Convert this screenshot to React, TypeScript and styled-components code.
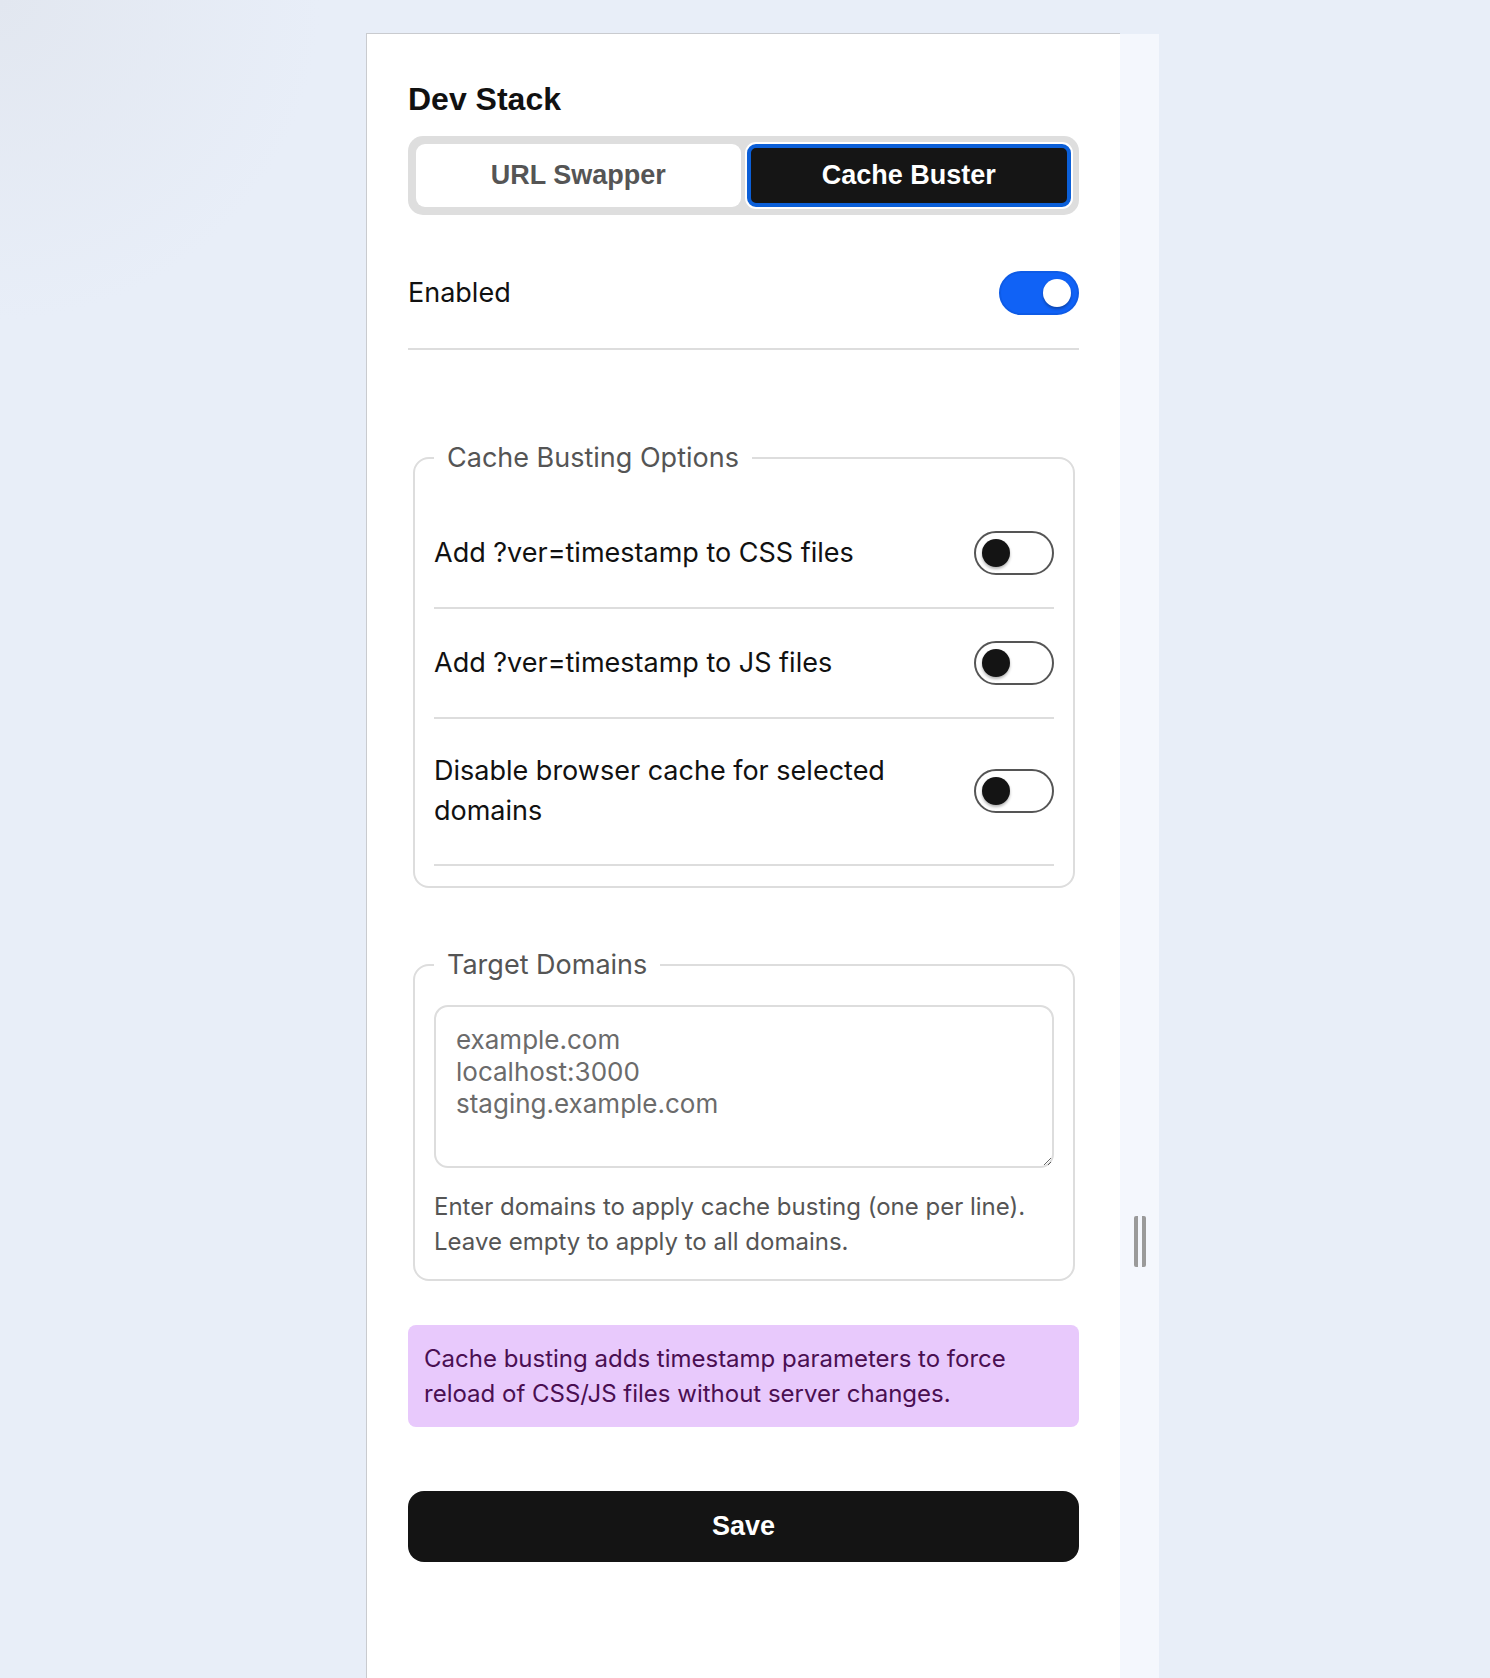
import { useState } from 'react';

import { createGlobalStyle, styled } from 'styled-components';

const GlobalStyle = createGlobalStyle`
  * {
    box-sizing: border-box;
  }

  html,
  body {
    margin: 0;
    padding: 0;
    height: 100%;
  }

  body {
    background: radial-gradient(circle at 0 0, #e2e7f0 0, #e8eef8 320px);
    font-family: Inter, 'Noto Sans', sans-serif;
    color: #111;
  }
`;

const SWITCH_LABELS = [
  'Add ?ver=timestamp to CSS files',
  'Add ?ver=timestamp to JS files',
  'Disable browser cache for selected domains',
];

const DOMAINS_PLACEHOLDER = 'example.com\nlocalhost:3000\nstaging.example.com';

/**
 * 토글 스위치. on 이면 파란 배경에 흰 손잡이.
 */
const Toggle = ({ on, onClick }: { on: boolean; onClick: () => void }) => (
  <S.Switch type="button" $on={on} onClick={onClick} aria-pressed={on}>
    <S.Knob $on={on} />
  </S.Switch>
);

export default function App() {
  const [tab, setTab] = useState<'url' | 'cache'>('cache');
  const [enabled, setEnabled] = useState(true);
  const [options, setOptions] = useState([false, false, false]);

  const flip = (index: number) =>
    setOptions((prev) => prev.map((value, i) => (i === index ? !value : value)));

  return (
    <>
      <GlobalStyle />
      <S.Page>
        <S.Panel>
          <S.Title>Dev Stack</S.Title>

          <S.Segmented>
            <S.TabButton $active={tab === 'url'} onClick={() => setTab('url')}>
              URL Swapper
            </S.TabButton>
            <S.TabButton $active={tab === 'cache'} onClick={() => setTab('cache')}>
              Cache Buster
            </S.TabButton>
          </S.Segmented>

          <S.EnabledRow>
            <S.Label>Enabled</S.Label>
            <Toggle on={enabled} onClick={() => setEnabled((v) => !v)} />
          </S.EnabledRow>

          <S.Group $gapTop={91} $padTop={25}>
            <S.Legend>Cache Busting Options</S.Legend>
            {SWITCH_LABELS.map((label, i) => (
              <S.OptionRow key={label}>
                <S.Label>{label}</S.Label>
                <Toggle on={options[i]} onClick={() => flip(i)} />
              </S.OptionRow>
            ))}
          </S.Group>

          <S.Group $gapTop={60} $padTop={22}>
            <S.Legend>Target Domains</S.Legend>
            <S.DomainInput placeholder={DOMAINS_PLACEHOLDER} rows={4} />
            <S.Help>
              Enter domains to apply cache busting (one per line).
              <br />
              Leave empty to apply to all domains.
            </S.Help>
          </S.Group>

          <S.Notice>
            Cache busting adds timestamp parameters to force reload of CSS/JS files without server
            changes.
          </S.Notice>

          <S.SaveButton type="button">Save</S.SaveButton>
        </S.Panel>

        <S.Gutter>
          <S.Handle />
        </S.Gutter>
      </S.Page>
    </>
  );
}

const S = {
  Page: styled.div`
    display: flex;
    align-items: stretch;

    min-height: 100vh;
    padding: 33px 0 0 366px;
  `,
  Panel: styled.main`
    display: flex;
    flex-direction: column;

    width: 754px;
    padding: 47px 41px 60px;

    background: #fff;
    border-top: 1px solid #c9cbcf;
    border-left: 1px solid #c9cbcf;
  `,
  Gutter: styled.div`
    display: flex;
    align-items: flex-start;
    justify-content: center;

    width: 39px;
    margin-top: 1px;
    padding-top: 1182px;

    background: #f4f7fd;
  `,
  Handle: styled.span`
    display: block;

    width: 12px;
    height: 51px;

    border-left: 4px solid #9a9a9a;
    border-right: 4px solid #9a9a9a;
    border-radius: 2px;
  `,
  Title: styled.h1`
    margin: 0;

    font-family: 'Liberation Sans', Arial, sans-serif;
    font-size: 32px;
    font-weight: 700;
    line-height: 37px;
    color: #111;
  `,
  Segmented: styled.div`
    display: grid;
    grid-template-columns: 1fr 1fr;
    column-gap: 6px;

    height: 79px;
    margin-top: 18px;
    padding: 8px;

    background: #dedede;
    border-radius: 15px;
  `,
  TabButton: styled.button<{ $active: boolean }>`
    font-family: 'Liberation Sans', Arial, sans-serif;
    font-size: 27px;
    font-weight: 700;
    color: ${({ $active }) => ($active ? '#fff' : '#555')};

    background: ${({ $active }) => ($active ? '#151515' : '#fff')};
    border: ${({ $active }) => ($active ? '4px solid #0b5fd8' : '0')};
    border-radius: 9px;
    box-shadow: ${({ $active }) => ($active ? '0 0 0 2px #fff' : 'none')};
    cursor: pointer;
  `,
  EnabledRow: styled.div`
    display: flex;
    align-items: center;
    justify-content: space-between;

    margin-top: 23px;
    padding: 33px 0;

    border-bottom: 2px solid #dddddd;
  `,
  Label: styled.span`
    max-width: 470px;

    font-size: 27px;
    line-height: 40px;
    color: #111;
  `,
  Switch: styled.button<{ $on: boolean }>`
    position: relative;
    flex-shrink: 0;

    width: 80px;
    height: 44px;
    padding: 0;

    background: ${({ $on }) => ($on ? '#1062f6' : '#fff')};
    border: 2px solid ${({ $on }) => ($on ? '#0e5be6' : '#555')};
    border-radius: 22px;
    cursor: pointer;
  `,
  Knob: styled.span<{ $on: boolean }>`
    position: absolute;
    top: 6px;
    left: ${({ $on }) => ($on ? '42px' : '6px')};

    width: 28px;
    height: 28px;

    background: ${({ $on }) => ($on ? '#fff' : '#141414')};
    border-radius: 50%;
    box-shadow: 0 2px 3px rgba(0, 0, 0, 0.3);
  `,
  Group: styled.fieldset<{ $gapTop: number; $padTop: number }>`
    margin: ${({ $gapTop }) => $gapTop}px 4px 0 5px;
    padding: ${({ $padTop }) => $padTop}px 19px 20px;

    border: 2px solid #dddddd;
    border-radius: 16px;
  `,
  Legend: styled.legend`
    padding: 0 13px;

    font-size: 27px;
    line-height: 33px;
    color: #555;
  `,
  OptionRow: styled.div`
    display: flex;
    align-items: center;
    justify-content: space-between;
    column-gap: 24px;

    padding: 32px 0;

    border-bottom: 2px solid #dddddd;

    &:last-of-type {
      padding-bottom: 33px;
    }
  `,
  DomainInput: styled.textarea`
    display: block;

    width: 100%;
    height: 163px;
    margin-top: 2px;
    padding: 17px 20px;

    font-family: Inter, 'Noto Sans', sans-serif;
    font-size: 26px;
    line-height: 32px;
    color: #111;

    background: #fff;
    border: 2px solid #dddddd;
    border-radius: 14px;
    outline: none;
    resize: vertical;

    &::placeholder {
      color: #6b6b6b;
    }
  `,
  Help: styled.p`
    margin: 21px 0 0;

    font-size: 24px;
    line-height: 35px;
    color: #555;
  `,
  Notice: styled.p`
    margin: 44px 0 0;
    padding: 16px 60px 16px 16px;

    font-size: 24px;
    line-height: 35px;
    color: #4a0f52;

    background: #e8c9fc;
    border-radius: 8px;
  `,
  SaveButton: styled.button`
    height: 71px;
    margin-top: 64px;

    font-family: 'Liberation Sans', Arial, sans-serif;
    font-size: 27px;
    font-weight: 700;
    color: #fff;

    background: #141414;
    border: 0;
    border-radius: 16px;
    cursor: pointer;
  `,
};
